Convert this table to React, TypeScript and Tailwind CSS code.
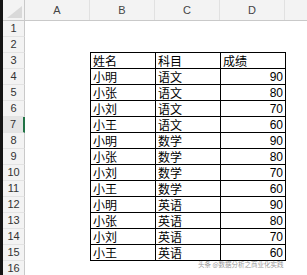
import React from "react";

type Row = { name: string; subject: string; score: string };

const data: Row[] = [
    { name: "小明", subject: "语文", score: "90" },
    { name: "小张", subject: "语文", score: "80" },
    { name: "小刘", subject: "语文", score: "70" },
    { name: "小王", subject: "语文", score: "60" },
    { name: "小明", subject: "数学", score: "90" },
    { name: "小张", subject: "数学", score: "80" },
    { name: "小刘", subject: "数学", score: "70" },
    { name: "小王", subject: "数学", score: "60" },
    { name: "小明", subject: "英语", score: "90" },
    { name: "小张", subject: "英语", score: "80" },
    { name: "小刘", subject: "英语", score: "70" },
    { name: "小王", subject: "英语", score: "60" },
];

const cjk = "font-['Noto_Sans_CJK_SC',sans-serif]";
const num = "font-['Liberation_Sans',Arial,sans-serif]";

function SheetRow({ n }: { n: number }) {
    // row 3 is the header of the table, rows 4-15 hold data
    const head = n === 3;
    const inTable = n >= 3 && n <= 15;
    const item = n >= 4 && n <= 15 ? data[n - 4] : null;
    const selected = n === 7;

    const bottom = n >= 2 && n <= 15 ? "border-b border-black" : "";
    const side = inTable ? "border-r border-black" : "";

    return (
        <div className="flex h-[16px] shrink-0">
            <div
                className={`w-[22px] shrink-0 flex items-center justify-center text-[11px] text-[#333] border-b border-[#e3e3e3] ${num} ${
                    selected ? "bg-[#e4e4e4] border-r-2 border-r-[#217346]" : "bg-[#f3f3f3] border-r border-r-[#c9c9c9]"
                }`}
            >
                {n}
            </div>
            <div className="w-[65px] shrink-0" />
            <div
                className={`w-[66px] shrink-0 flex items-center pl-[2px] text-[12px] leading-[14px] text-black ${cjk} ${bottom} ${
                    inTable ? "border-x border-black" : ""
                }`}
            >
                {head ? "姓名" : item?.name}
            </div>
            <div className={`w-[65px] shrink-0 flex items-center pl-[2px] text-[12px] leading-[14px] text-black ${cjk} ${bottom} ${side}`}>
                {head ? "科目" : item?.subject}
            </div>
            <div
                className={`w-[65px] shrink-0 flex items-center pr-[2px] leading-[14px] text-black ${bottom} ${side} ${
                    head ? `justify-start pl-[2px] text-[12px] ${cjk}` : `justify-end text-[12px] ${num}`
                }`}
            >
                {head ? "成绩" : item?.score}
            </div>
            <div className="flex-1" />
        </div>
    );
}

export default function App() {
    const rows = Array.from({ length: 16 }, (_, i) => i + 1);

    return (
        <div className="relative flex h-[275px] w-[307px] overflow-hidden bg-white">
            <div className="w-[3px] shrink-0 bg-[#141414]" />
            <div className="flex flex-1 flex-col">
                <div className={`flex h-[21px] shrink-0 bg-[#f3f3f3] border-b border-[#c9c9c9] text-[11px] text-[#444] ${num}`}>
                    <div className="w-[22px] shrink-0 border-r border-[#c9c9c9] flex items-end justify-end p-[2px]">
                        <svg width="15" height="12" viewBox="0 0 15 12">
                            <polygon points="15,0 15,12 0,12" fill="#d9d9d9" />
                        </svg>
                    </div>
                    <div className="w-[65px] shrink-0 border-r border-[#e1e1e1] flex items-center justify-center">A</div>
                    <div className="w-[65px] shrink-0 border-r border-[#e1e1e1] flex items-center justify-center">B</div>
                    <div className="w-[65px] shrink-0 border-r border-[#e1e1e1] flex items-center justify-center">C</div>
                    <div className="w-[65px] shrink-0 border-r border-[#e1e1e1] flex items-center justify-center">D</div>
                    <div className="flex-1" />
                </div>
                {rows.map((n) => (
                    <SheetRow key={n} n={n} />
                ))}
            </div>
            <div className={`absolute left-[198px] top-[261px] text-[6.5px] leading-none text-[#9a9a9a] whitespace-nowrap ${cjk}`}>
                头条 @数据分析之商业化实践
            </div>
        </div>
    );
}
